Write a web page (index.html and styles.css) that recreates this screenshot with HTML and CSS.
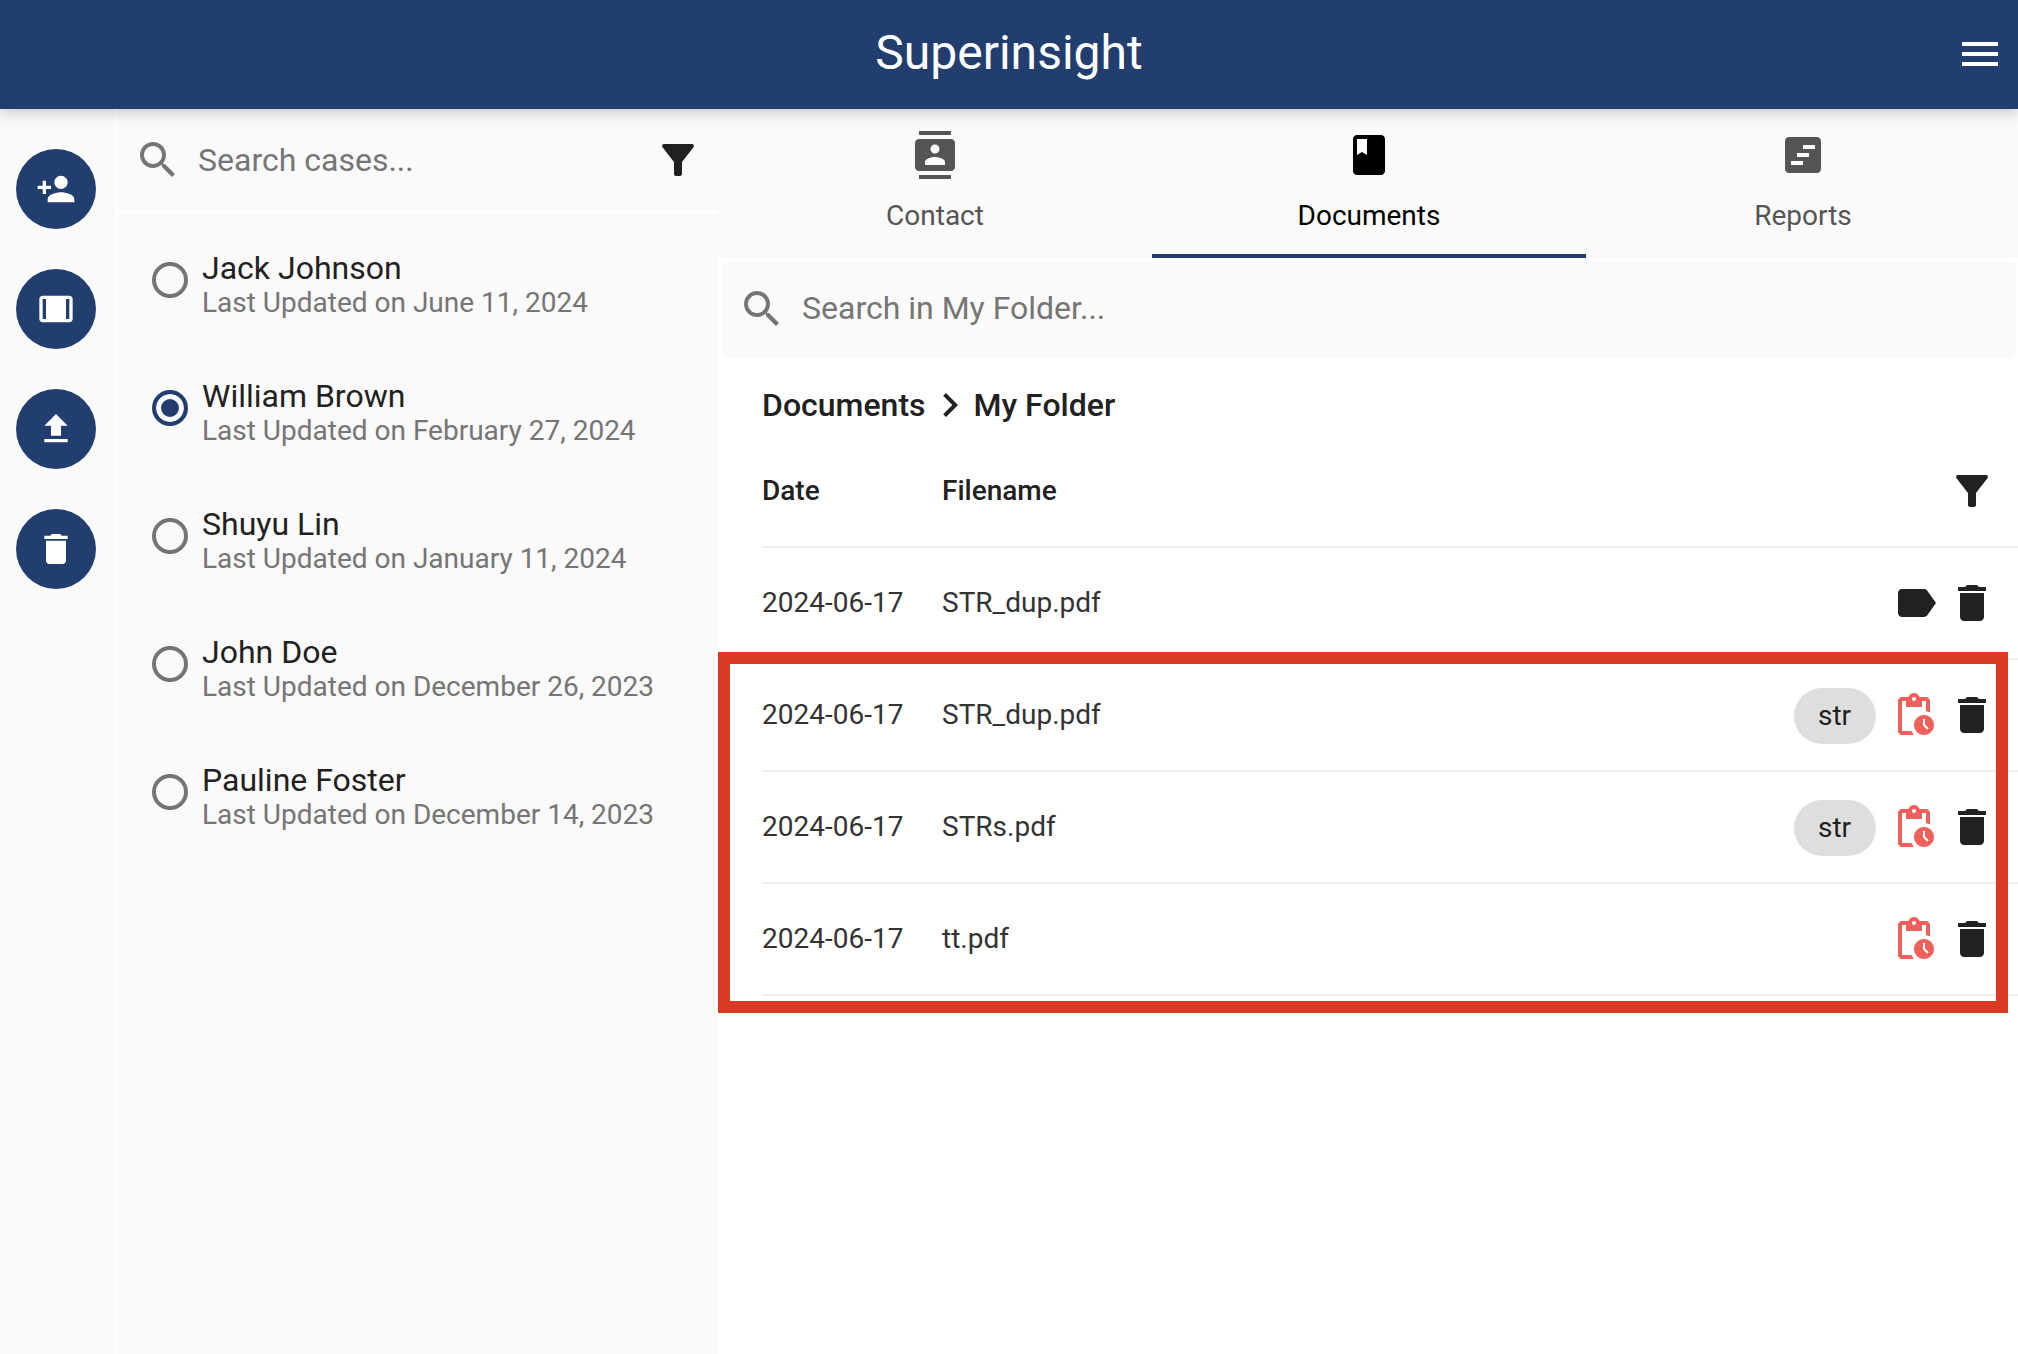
FILE: index.html
```html
<!DOCTYPE html>
<html lang="en">
<head>
    <meta charset="UTF-8">
    <meta name="viewport" content="width=device-width, initial-scale=1.0">
    <title>Superinsight</title>
    <link rel="stylesheet" href="styles.css">
</head>
<body>
    <!-- Icon definitions -->
    <svg class="icon-defs" xmlns="http://www.w3.org/2000/svg">
        <symbol id="i-menu" viewBox="0 0 24 24"><path d="M3 18h18v-2H3v2zm0-5h18v-2H3v2zm0-7v2h18V6H3z"/></symbol>
        <symbol id="i-search" viewBox="0 0 24 24"><path d="M15.5 14h-.79l-.28-.27C15.41 12.59 16 11.11 16 9.5 16 5.91 13.09 3 9.5 3S3 5.91 3 9.5 5.91 16 9.5 16c1.61 0 3.09-.59 4.23-1.57l.27.28v.79l5 4.99L20.49 19l-4.99-5zm-6 0C7.01 14 5 11.99 5 9.5S7.01 5 9.5 5 14 7.01 14 9.5 11.99 14 9.5 14z"/></symbol>
        <symbol id="i-filter" viewBox="0 0 24 24"><path d="M4.25 5.61C6.27 8.2 10 13 10 13v6c0 .55.45 1 1 1h2c.55 0 1-.45 1-1v-6s3.72-4.8 5.74-7.39c.51-.66.04-1.61-.79-1.61H5.04c-.83 0-1.3.95-.79 1.61z"/></symbol>
        <symbol id="i-person-add" viewBox="0 0 24 24"><path transform="matrix(-1 0 0 1 24 0)" d="M13 8c0-2.21-1.79-4-4-4S5 5.79 5 8s1.79 4 4 4 4-1.79 4-4zM15 10v2h3v3h2v-3h3v-2h-3V7h-2v3h-3zM1 18v2h16v-2c0-2.66-5.33-4-8-4s-8 1.34-8 4z"/></symbol>
        <symbol id="i-width" viewBox="0 0 24 24"><path d="M20 4H4c-1.1 0-2 .9-2 2v12c0 1.1.9 2 2 2h16c1.1 0 2-.9 2-2V6c0-1.1-.9-2-2-2zM4 18V6h2v12H4zm16 0h-2V6h2v12z"/></symbol>
        <symbol id="i-upload" viewBox="0 0 24 24"><path d="M9 16h6v-6h4l-7-7-7 7h4v6zm-4 2h14v2H5v-2z"/></symbol>
        <symbol id="i-delete" viewBox="0 0 24 24"><path d="M6 19c0 1.1.9 2 2 2h8c1.1 0 2-.9 2-2V7H6v12zM19 4h-3.5l-1-1h-5l-1 1H5v2h14V4z"/></symbol>
        <symbol id="i-contacts" viewBox="0 0 24 24"><path d="M20 0H4v2h16V0zM4 24h16v-2H4v2zM20 4H4c-1.1 0-2 .9-2 2v12c0 1.1.9 2 2 2h16c1.1 0 2-.9 2-2V6c0-1.1-.9-2-2-2zm-8 2.75c1.24 0 2.25 1.01 2.25 2.25s-1.01 2.25-2.25 2.25S9.75 10.24 9.75 9 10.76 6.75 12 6.75zM17 17H7v-1.5c0-1.67 3.33-2.5 5-2.5s5 .83 5 2.5V17z"/></symbol>
        <symbol id="i-book" viewBox="0 0 24 24"><path d="M18 2H6c-1.1 0-2 .9-2 2v16c0 1.1.9 2 2 2h12c1.1 0 2-.9 2-2V4c0-1.1-.9-2-2-2zM6 4h5v8l-2.5-1.5L6 12V4z"/></symbol>
        <symbol id="i-report" viewBox="0 0 24 24"><path fill-rule="evenodd" d="M19 3H5c-1.1 0-2 .9-2 2v14c0 1.1.9 2 2 2h14c1.1 0 2-.9 2-2V5c0-1.1-.9-2-2-2zM12 7h6v2h-6V7zM9 11h6v2H9v-2zM6 15h6v2H6v-2z"/></symbol>
        <symbol id="i-chevron" viewBox="0 0 24 24"><path d="M10 6L8.59 7.41 13.17 12l-4.58 4.59L10 18l6-6z"/></symbol>
        <symbol id="i-label" viewBox="0 0 24 24"><path d="M17.63 5.84C17.27 5.33 16.67 5 16 5L5 5.01C3.9 5.01 3 5.9 3 7v10c0 1.1.9 1.99 2 1.99L16 19c.67 0 1.27-.33 1.63-.84L22 12l-4.37-6.16z"/></symbol>
        <symbol id="i-pending" viewBox="0 0 24 24"><path d="M17 12c-2.76 0-5 2.24-5 5s2.24 5 5 5c2.76 0 5-2.24 5-5s-2.24-5-5-5zm1.65 7.35l-2.15-2.15V14h1v2.79l1.85 1.85-.7.71zM18 3h-3.18C14.4 1.84 13.3 1 12 1s-2.4.84-2.82 2H6c-1.1 0-2 .9-2 2v15c0 1.1.9 2 2 2h6.11c-.59-.57-1.07-1.25-1.42-2H6V5h2v3h8V5h2v5.08c.71.1 1.38.31 2 .6V5c0-1.1-.9-2-2-2zm-6 2c-.55 0-1-.45-1-1s.45-1 1-1 1 .45 1 1-.45 1-1 1z"/></symbol>
    </svg>

    <header class="app-bar">
        <h1>Superinsight</h1>
        <button class="menu-btn"><svg class="icon"><use href="#i-menu"/></svg></button>
    </header>

    <div class="app-body">
        <!-- Action buttons -->
        <nav class="rail">
            <button class="fab"><svg class="fab-icon"><use href="#i-person-add"/></svg></button>
            <button class="fab"><svg class="fab-icon"><use href="#i-width"/></svg></button>
            <button class="fab"><svg class="fab-icon"><use href="#i-upload"/></svg></button>
            <button class="fab"><svg class="fab-icon"><use href="#i-delete"/></svg></button>
        </nav>

        <!-- Case list -->
        <aside class="cases">
            <div class="case-search">
                <svg class="icon icon-muted"><use href="#i-search"/></svg>
                <span class="placeholder">Search cases...</span>
                <svg class="icon case-filter"><use href="#i-filter"/></svg>
            </div>
            <ul class="case-list">
                <li class="case">
                    <span class="radio"></span>
                    <div class="case-text"><div class="case-name">Jack Johnson</div><div class="case-date">Last Updated on June 11, 2024</div></div>
                </li>
                <li class="case">
                    <span class="radio radio-on"></span>
                    <div class="case-text"><div class="case-name">William Brown</div><div class="case-date">Last Updated on February 27, 2024</div></div>
                </li>
                <li class="case">
                    <span class="radio"></span>
                    <div class="case-text"><div class="case-name">Shuyu Lin</div><div class="case-date">Last Updated on January 11, 2024</div></div>
                </li>
                <li class="case">
                    <span class="radio"></span>
                    <div class="case-text"><div class="case-name">John Doe</div><div class="case-date">Last Updated on December 26, 2023</div></div>
                </li>
                <li class="case">
                    <span class="radio"></span>
                    <div class="case-text"><div class="case-name">Pauline Foster</div><div class="case-date">Last Updated on December 14, 2023</div></div>
                </li>
            </ul>
        </aside>

        <main class="content">
            <div class="tabs">
                <div class="tab">
                    <svg class="icon"><use href="#i-contacts"/></svg>
                    <span>Contact</span>
                </div>
                <div class="tab tab-active">
                    <svg class="icon"><use href="#i-book"/></svg>
                    <span>Documents</span>
                </div>
                <div class="tab">
                    <svg class="icon"><use href="#i-report"/></svg>
                    <span>Reports</span>
                </div>
            </div>

            <div class="folder-search">
                <svg class="icon icon-muted"><use href="#i-search"/></svg>
                <span class="placeholder">Search in My Folder...</span>
            </div>

            <div class="breadcrumb">
                <span>Documents</span>
                <svg class="icon"><use href="#i-chevron"/></svg>
                <span>My Folder</span>
            </div>

            <div class="file-table">
                <div class="file-row file-head">
                    <span class="col-date">Date</span>
                    <span class="col-name">Filename</span>
                    <div class="col-actions"><svg class="icon"><use href="#i-filter"/></svg></div>
                </div>
                <div class="file-row">
                    <span class="col-date">2024-06-17</span>
                    <span class="col-name">STR_dup.pdf</span>
                    <div class="col-actions">
                        <svg class="icon"><use href="#i-label"/></svg>
                        <svg class="icon"><use href="#i-delete"/></svg>
                    </div>
                </div>
                <div class="file-row">
                    <span class="col-date">2024-06-17</span>
                    <span class="col-name">STR_dup.pdf</span>
                    <div class="col-actions">
                        <span class="chip">str</span>
                        <svg class="icon icon-pending"><use href="#i-pending"/></svg>
                        <svg class="icon"><use href="#i-delete"/></svg>
                    </div>
                </div>
                <div class="file-row">
                    <span class="col-date">2024-06-17</span>
                    <span class="col-name">STRs.pdf</span>
                    <div class="col-actions">
                        <span class="chip">str</span>
                        <svg class="icon icon-pending"><use href="#i-pending"/></svg>
                        <svg class="icon"><use href="#i-delete"/></svg>
                    </div>
                </div>
                <div class="file-row">
                    <span class="col-date">2024-06-17</span>
                    <span class="col-name">tt.pdf</span>
                    <div class="col-actions">
                        <svg class="icon icon-pending"><use href="#i-pending"/></svg>
                        <svg class="icon"><use href="#i-delete"/></svg>
                    </div>
                </div>
            </div>

            <!-- Red annotation box drawn over the last three rows -->
            <div class="annotation"></div>
        </main>
    </div>
</body>
</html>
```

FILE: styles.css
```css
* {
    box-sizing: border-box;
}
html, body {
    height: 100%;
}
body {
    margin: 0;
    font-family: Roboto, "Noto Sans", sans-serif;
    color: #212121;
    background-color: #fff;
    overflow: hidden;
}
button {
    border: 0;
    padding: 0;
    background: none;
    cursor: pointer;
}
.icon-defs {
    display: none;
}
.icon {
    display: block;
    flex: none;
    width: 48px;
    height: 48px;
    fill: currentColor;
}
.icon-muted {
    color: #757575;
}
.icon-pending {
    margin: 0 2px 0 -2px;
    color: #ee605b;
}
.placeholder {
    font-size: 32px;
    color: #757575;
}

/* Top bar */
.app-bar {
    position: relative;
    z-index: 2;
    display: flex;
    align-items: center;
    justify-content: center;
    height: 109px;
    background-color: #223e6e;
    box-shadow: 0 4px 14px rgba(0, 0, 0, 0.2);
}
.app-bar h1 {
    margin: 0 0 4px;
    font-size: 48px;
    font-weight: 400;
    color: #fff;
}
.menu-btn {
    position: absolute;
    top: 30px;
    right: 14px;
    color: #fff;
}

.app-body {
    display: flex;
    height: calc(100% - 109px);
}

/* Round action buttons */
.rail {
    display: flex;
    flex-direction: column;
    gap: 40px;
    width: 115px;
    margin-right: 3px;
    padding: 40px 0 0 16px;
    background-color: #fafafa;
}
.fab {
    display: flex;
    align-items: center;
    justify-content: center;
    width: 80px;
    height: 80px;
    border-radius: 50%;
    color: #fff;
    background-color: #223e6e;
}
.fab-icon {
    width: 40px;
    height: 40px;
    fill: currentColor;
}

/* Case list */
.cases {
    width: 600px;
    background-color: #fafafa;
}
.case-search {
    display: flex;
    align-items: center;
    gap: 16px;
    height: 105px;
    padding: 0 16px;
    border-bottom: 4px solid #fff;
}
.case-filter {
    margin-left: auto;
}
.case-list {
    margin: 0;
    padding: 2px 0 0;
    list-style: none;
}
.case {
    display: flex;
    align-items: center;
    gap: 14px;
    height: 128px;
    padding-left: 34px;
}
.case-text {
    padding-top: 8px;
}
.radio {
    flex: none;
    width: 36px;
    height: 36px;
    border: 4px solid #757575;
    border-radius: 50%;
}
.radio-on {
    border-color: #223e6e;
    background-color: #223e6e;
    box-shadow: inset 0 0 0 5px #fafafa;
}
.case-name {
    font-size: 32px;
    line-height: 38px;
}
.case-date {
    font-size: 28px;
    line-height: 32px;
    color: #757575;
}

/* Right hand side */
.content {
    position: relative;
    flex: 1;
}
.tabs {
    display: flex;
    height: 149px;
    margin-right: -2px;
    background-color: #fafafa;
}
.tab {
    display: flex;
    flex: 1;
    flex-direction: column;
    align-items: center;
    padding-top: 22px;
    font-size: 28px;
    line-height: 34px;
    color: #555;
}
.tab span {
    margin-top: 20px;
}
.tab-active {
    color: #000;
    border-bottom: 4px solid #223e6e;
}
.folder-search {
    display: flex;
    align-items: center;
    gap: 16px;
    height: 96px;
    margin: 4px 2px 0 4px;
    padding: 0 0 2px 16px;
    border-radius: 8px;
    background-color: #fafafa;
}
.folder-search .placeholder {
    margin-bottom: 2px;
}
.breadcrumb {
    display: flex;
    align-items: center;
    height: 78px;
    padding: 23px 0 7px 44px;
    font-size: 32px;
    font-weight: 500;
}
.file-table {
    padding-left: 44px;
}
.file-row {
    display: flex;
    align-items: center;
    height: 112px;
    padding-right: 22px;
    border-bottom: 2px solid #eee;
    font-size: 28px;
    color: #333;
}
.file-head {
    font-weight: 500;
    color: #212121;
}
.col-date, .col-name {
    padding-bottom: 2px;
}
.col-date {
    width: 180px;
}
.col-actions {
    display: flex;
    align-items: center;
    gap: 8px;
    margin-left: auto;
    color: #212121;
}
.chip {
    width: 82px;
    height: 56px;
    margin: 2px 8px 0 0;
    padding-right: 1px;
    border-radius: 28px;
    background-color: #dedede;
    font-size: 28px;
    line-height: 56px;
    text-align: center;
}
.annotation {
    position: absolute;
    top: 543px;
    left: 0;
    width: 1290px;
    height: 361px;
    border: 12px solid #d93a25;
    pointer-events: none;
}
```
